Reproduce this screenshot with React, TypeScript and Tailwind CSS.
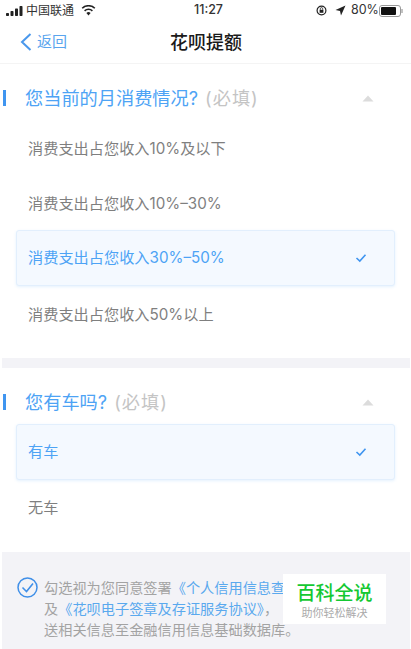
const font = { fontFamily: 'Inter, "Noto Sans CJK SC", sans-serif' };

function Heading({ title, top }: { title: string; top: string }) {
  return (
    <div className={`flex items-center h-[30px] ${top}`}>
      <div className="w-[3px] h-[16px] ml-[3px] bg-[#3f95f0]" />
      <div className="ml-[20px] -translate-x-px flex-1 text-[18.2px] text-[#4da3f5] leading-[30px]">
        {title}<span className="ml-[1px] text-[#c4c4c4] tracking-[1px]"> (必填)</span>
      </div>
      <svg width="12" height="7" viewBox="0 0 12 7" className="mr-[37px]"><path d="M6 0.5 L11.5 6.5 L0.5 6.5 Z" fill="#dcdcdc" /></svg>
    </div>
  );
}

function Plain({ text, h }: { text: string; h: string }) {
  return <div className={`${h} flex items-center pl-[28px] text-[15.2px] text-[#7f7f7f]`}>{text}</div>;
}

function Selected({ text }: { text: string }) {
  return (
    <div className="mx-[16px] h-[56px] flex items-center justify-between pl-[11px] pr-[27px] rounded-[3px] border border-[#e2effd] bg-[#f4f9ff] shadow-[0_1px_3px_rgba(77,163,245,0.15)] text-[15.2px] text-[#4da3f5]">
      {text}
      <svg width="12" height="10" viewBox="0 0 12 10"><path d="M1.5 5 L4.8 8 L10.5 1.8" fill="none" stroke="#3f95f0" strokeWidth="1.6" /></svg>
    </div>
  );
}

export default function App() {
  return (
    <div className="relative w-[411px] h-[649px] bg-white overflow-hidden" style={font}>
      <div className="h-[21px] flex items-center pl-[6px] pr-[5px] text-[12px] text-[#222]">
        <svg width="17" height="10" viewBox="0 0 17 10" fill="#222"><rect x="0" y="7" width="3" height="3" rx="0.7" /><rect x="4.5" y="5" width="3" height="5" rx="0.7" /><rect x="9" y="2.5" width="3" height="7.5" rx="0.7" /><rect x="13.5" y="0" width="3" height="10" rx="0.7" /></svg>
        <span className="ml-[3px] text-[#333] w-[48px]">中国联通</span>
        <svg className="ml-[7px]" width="15" height="11" viewBox="0 0 15 11"><path d="M7.5 10.5 L5.4 8 A3 3 0 0 1 9.6 8 Z" fill="#222" /><path d="M3.6 5.9 A5.6 5.6 0 0 1 11.4 5.9 M1.2 3.3 A9 9 0 0 1 13.8 3.3" fill="none" stroke="#222" strokeWidth="1.6" /></svg>
        <span className="ml-[98px] font-medium text-[12.5px] text-[#333] w-[32px]">11:27</span>
        <svg className="ml-[90px]" width="11" height="11" viewBox="0 0 11 11"><circle cx="5.5" cy="5.5" r="4.4" fill="none" stroke="#222" strokeWidth="1.2" /><rect x="3.6" y="4.8" width="3.8" height="3" fill="#222" /><path d="M4.3 4.8 V3.8 A1.2 1.2 0 0 1 6.7 3.8 V4.8" fill="none" stroke="#222" strokeWidth="0.8" /></svg>
        <svg className="ml-[8px]" width="11" height="11" viewBox="0 0 11 11"><path d="M10.5 0.5 L0.5 5 L5 6 L6 10.5 Z" fill="#222" /></svg>
        <span className="ml-[5px] text-[12.5px] text-[#333] w-[27px]">80%</span>
        <svg className="ml-[1px]" width="25" height="12" viewBox="0 0 25 12"><rect x="0.5" y="0.5" width="21" height="11" rx="2.5" fill="none" stroke="#999" /><rect x="2" y="2" width="15" height="8" rx="1" fill="#111" /><path d="M23 4 V8" stroke="#999" strokeWidth="1.2" /></svg>
      </div>

      <div className="relative h-[43px] flex items-center border-b border-[#f4f4f4]">
        <svg className="ml-[20px]" width="12" height="18" viewBox="0 0 12 18"><path d="M10.5 1 L2 9 L10.5 17" fill="none" stroke="#4a98ec" strokeWidth="2" /></svg>
        <span className="ml-[5px] text-[15px] text-[#5aa5ee]">返回</span>
        <span className="absolute left-0 right-0 text-center pl-[1px] text-[18px] font-medium text-[#1a1a1a]">花呗提额</span>
      </div>

      <Heading title="您当前的月消费情况?" top="mt-[19px]" />
      <div className="mt-[8px]">
        <Plain text="消费支出占您收入10%及以下" h="h-[56px]" />
        <Plain text="消费支出占您收入10%–30%" h="h-[53px] pt-[2px]" />
        <Selected text="消费支出占您收入30%–50%" />
        <Plain text="消费支出占您收入50%以上" h="h-[56px] pt-[2px]" />
      </div>

      <div className="mt-[16px] ml-[2px] mr-px h-[10px] bg-[#f3f3f7]" />

      <Heading title="您有车吗?" top="mt-[19px]" />
      <div className="mt-[7px]"><Selected text="有车" /></div>
      <Plain text="无车" h="h-[56px]" />

      <div className="mt-[16px] ml-[2px] mr-px h-[97px] bg-[#f3f3f7] flex pt-[25px] pl-[15px] pr-[10px]">
        <svg className="shrink-0" width="21" height="21" viewBox="0 0 21 21"><circle cx="10.5" cy="10.5" r="9.5" fill="none" stroke="#3f8fe8" strokeWidth="1.5" /><path d="M5.5 10.5 L9.5 14.5 L16 6.5" fill="none" stroke="#3f8fe8" strokeWidth="1.6" /></svg>
        <p className="ml-[6px] text-[14.2px] leading-[21px] text-[#a3a3a3] whitespace-nowrap">
          勾选视为您同意签署<span className="text-[#5aa9ee]">《个人信用信息查询授权书》</span><br />
          及<span className="text-[#5aa9ee]">《花呗电子签章及存证服务协议》</span>，<span className="ml-[6px]">并授权支付宝报</span><br />
          送相关信息至金融信用信息基础数据库。
        </p>
      </div>

      <div className="absolute left-[283px] top-[574px] w-[103px] h-[50px] bg-white flex flex-col items-center pt-[9px]">
        <span className="text-[19px] leading-[22px] font-medium text-[#14c832]">百科全说</span>
        <span className="text-[11px] leading-[14px] mt-[1px] text-[#aaa]">助你轻松解决</span>
      </div>
    </div>
  );
}
